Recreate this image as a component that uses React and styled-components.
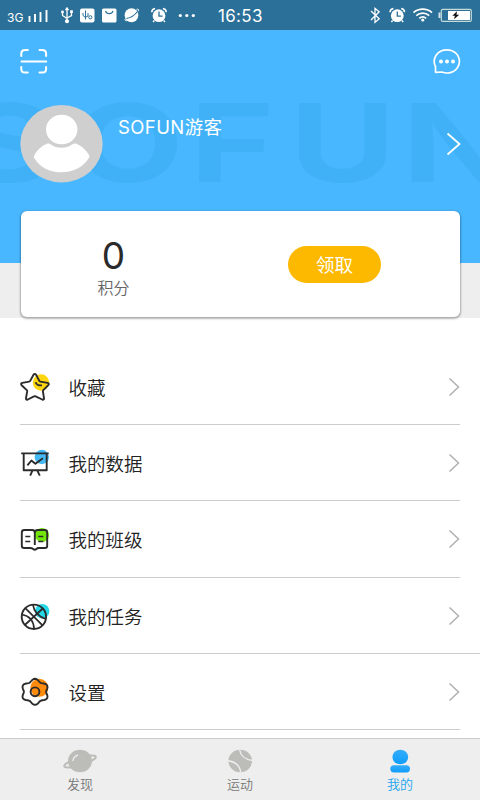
import React, { useState } from 'react';
import styled, { createGlobalStyle } from 'styled-components';

const menus = [
  { name: '收藏', icon: StarIcon },
  { name: '我的数据', icon: BoardIcon },
  { name: '我的班级', icon: BookIcon },
  { name: '我的任务', icon: BallIcon, wide: true },
  { name: '设置', icon: GearIcon },
];

const tabs = [
  { name: '发现', icon: PlanetIcon },
  { name: '运动', icon: TennisIcon },
  { name: '我的', icon: PersonIcon },
];

const App = () => {
  const [selectedTab, setSelectedTab] = useState('我的');

  return (
    <>
      <GlobalStyle />
      <Screen>
        <StatusBar>
          <StatusLeft />
          <Time>16:53</Time>
          <StatusRight />
        </StatusBar>
        <Header>
          <Watermark />
          <Toolbar>
            <ScanIcon />
            <MessageIcon />
          </Toolbar>
          <Profile>
            <Avatar />
            <UserName>SOFUN游客</UserName>
            <Arrow width={15} height={24} color='#fff' stroke={1.8} />
          </Profile>
        </Header>
        <CardArea>
          <Card>
            <Points>
              <Score>0</Score>
              <ScoreLabel>积分</ScoreLabel>
            </Points>
            <ButtonCell>
              <ReceiveButton>领取</ReceiveButton>
            </ButtonCell>
          </Card>
        </CardArea>
        <MenuList>
          {menus.map(({ name, icon: Icon, wide }) => (
            <MenuItem key={name} $wide={wide}>
              <Icon />
              <MenuName>{name}</MenuName>
              <Arrow width={12} height={20} color='#b0b0b0' stroke={1.5} />
            </MenuItem>
          ))}
        </MenuList>
        <TabBar>
          {tabs.map(({ name, icon: Icon }) => (
            <Tab key={name} $active={selectedTab === name} onClick={() => setSelectedTab(name)}>
              <Icon />
              {name}
            </Tab>
          ))}
        </TabBar>
      </Screen>
    </>
  );
};

export default App;

function AlarmGlyph({ x }) {
  return (
    <g transform={`translate(${x} 15.5)`}>
      <circle r='6.4' cy='0.2' fill='#fff' />
      <path d='M-7.3 -3.3a4 4 0 0 1 3.4 -3.6M7.3 -3.3a4 4 0 0 0 -3.4 -3.6M-4.7 5l-1.2 1.4M4.7 5l1.2 1.4' stroke='#fff' strokeWidth='1.5' fill='none' />
      <path d='M0 -4V0.6H3.6' stroke='#2b7098' strokeWidth='1.3' fill='none' />
    </g>
  );
}

function StatusLeft() {
  return (
    <svg width='218' height='30' viewBox='0 0 218 30'>
      <StatusText x='7' y='21.5'>3G</StatusText>
      <path d='M29.5 22v-6M35 22v-8M40.5 22v-10M46.5 22V10' stroke='#fff' strokeWidth='1.9' />
      <g stroke='#fff' strokeWidth='1.3' fill='none'>
        <path d='M67 8v13M62.5 12v3.5l4.5 3M71.5 11.5v4L67 18' />
        <circle cx='67' cy='21.2' r='1.4' fill='#fff' />
        <path d='M65.2 10L67 7.2 68.8 10z' fill='#fff' strokeWidth='0.5' />
        <circle cx='62.5' cy='12' r='0.8' />
        <path d='M70.8 11h1.4v1.4h-1.4z' />
      </g>
      <rect x='80' y='8.5' width='14.5' height='14' rx='2' fill='#fff' />
      <g stroke='#2b7098' strokeWidth='1' fill='none'>
        <path d='M85.5 10.5v9M83 13v2.5l2.5 2M88 13v3l-2.5 1.5' />
        <circle cx='90.3' cy='17.3' r='1.6' />
      </g>
      <rect x='102' y='8.5' width='14.5' height='14' rx='1.6' fill='#fff' />
      <path d='M105.5 10.8c1 3.8 6.5 3.8 7.5 0' stroke='#2b7098' strokeWidth='1.1' fill='none' />
      <ellipse cx='131.5' cy='15.2' rx='6.8' ry='7' fill='#fff' />
      <path d='M126.5 18.5c4-.7 8-3 11-7' stroke='#2b7098' strokeWidth='1.1' fill='none' />
      <path d='M125.3 18.8c-.7 1.6 .3 2.3 2 1.8M136.5 9.4c2-.7 2.6.3 1.8 1.8' stroke='#fff' strokeWidth='1' fill='none' />
      <AlarmGlyph x={159} />
      <g fill='#fff'>
        <circle cx='180.3' cy='15.5' r='1.6' />
        <circle cx='186.8' cy='15.5' r='1.6' />
        <circle cx='193.3' cy='15.5' r='1.6' />
      </g>
    </svg>
  );
}

function StatusRight() {
  return (
    <svg width='112' height='30' viewBox='368 0 112 30'>
      <path d='M371 11l8.2 7.8-4.2 3.6V8.4l4.2 3.3L371 20' stroke='#fff' strokeWidth='1.3' fill='none' />
      <AlarmGlyph x={397.3} />
      <g stroke='#fff' strokeWidth='1.7' fill='none'>
        <path d='M413.5 12.6c5.2-4.6 13.3-4.6 18.5 0' />
        <path d='M416.3 15.6c3.7-3.2 9.2-3.2 12.9 0' />
        <path d='M419.3 18.3c2-1.7 4.9-1.7 6.9 0' />
      </g>
      <circle cx='422.8' cy='20' r='1.6' fill='#fff' />
      <rect x='441.3' y='9.4' width='30' height='12' rx='1.4' stroke='#c4dbd8' strokeWidth='1.2' fill='none' />
      <path d='M440.5 12.5h-2v5.5h2z' fill='#d5e2ea' />
      <path d='M448 11h22v9h-22z' fill='#fff' />
      <path d='M457 11.3l-4.6 4.5h2.6l-1 3.5 5.2-4.5h-2.7z' fill='#111' />
    </svg>
  );
}

function Watermark() {
  return (
    <WatermarkSvg viewBox='0 30 480 233' aria-hidden='true'>
      <WatermarkText transform='scale(1.34 1)' y='182.5' x='-29 54 141.5 216 300'>
        SOFUN
      </WatermarkText>
    </WatermarkSvg>
  );
}

function ScanIcon() {
  return (
    <svg width='28' height='26' viewBox='20 48 28 26' fill='none' stroke='#fff' strokeWidth='2' strokeLinecap='round'>
      <path d='M21.3 56v-2.3q0-3.6 3.8-3.6h2.7M39.5 50.1h2.8q3.8 0 3.8 3.6V56M21.3 67v2q0 3.6 3.8 3.6h2.7M39.5 72.6h2.8q3.8 0 3.8-3.6v-2' />
      <path d='M21.5 61.5h24.7' />
    </svg>
  );
}

function MessageIcon() {
  return (
    <svg width='28' height='27' viewBox='433 48 28 27' fill='none' stroke='#fff' strokeWidth='1.7'>
      <path d='M435.5 72.3V66.5C431.5 58.5 437.3 49.8 447 49.8c7 0 12.4 5 12.4 11.5 0 6.6-5.4 11.7-12.4 11.7-2.3 0-3.8-.5-5.1-1z' strokeLinejoin='round' />
      <g fill='#fff' stroke='none'>
        <circle cx='441' cy='61.6' r='2' />
        <circle cx='447' cy='61.6' r='2' />
        <circle cx='453' cy='61.6' r='2' />
      </g>
    </svg>
  );
}

function Avatar() {
  return (
    <svg width='83' height='78' viewBox='20 105 83 78'>
      <ellipse cx='61.5' cy='143.8' rx='41.2' ry='38.7' fill='#cfcfcf' />
      <ellipse cx='61.7' cy='129.5' rx='15.7' ry='14.8' fill='#fff' />
      <path d='M47.5 143.6q1.5-.6 3 .6c6.5 4.8 15.5 4.8 22 0q1.5-1.2 3.2-.6c6 2.3 10.5 6.5 13.4 11.5q.8 1.5-.2 2.9C77.5 176.8 46 177.4 34.3 158.2q-.9-1.4-.1-2.9c3-5.2 7.3-9.4 13.3-11.7z' fill='#fff' />
    </svg>
  );
}

function Arrow({ width, height, color, stroke }) {
  return (
    <svg width={width} height={height} viewBox={`0 0 ${width} ${height}`} fill='none' stroke={color} strokeWidth={stroke}>
      <path d={`M1.5 1.5L${width - 1.5} ${height / 2}L1.5 ${height - 1.5}`} />
    </svg>
  );
}

function StarIcon() {
  return (
    <MenuSvg viewBox='20 372 30 30'>
      <circle cx='41' cy='382.5' r='8.2' fill='#ffd510' stroke='none' />
      <path d='M33.5 374.8q1.3-1.8 2.6 0l3.2 6.1q.3.6 1 .7l7.3 1.3q2 .6.7 2.3l-5 5q-.5.5-.4 1.2l1.1 6.8q.1 2-1.8 1.3l-6.6-3.2q-.8-.4-1.6 0l-6.2 3.2q-2 .7-1.8-1.3l1.2-6.8q.1-.7-.4-1.2l-5.2-5q-1.3-1.7.7-2.3l6.9-1.3q.7-.1 1-.7z' />
      <path d='M35.5 382.2c.8 2.3 3.6 3.6 6.4 3' />
    </MenuSvg>
  );
}

function BoardIcon() {
  return (
    <MenuSvg viewBox='20 448 30 30'>
      <circle cx='41.8' cy='457' r='7.2' fill='#45b9f5' stroke='none' />
      <path d='M21.2 453.4h27.5M23.7 453.5v16.7h23v-16.7M27.4 465.3l4-4.8 4 3.2 7.5-5.5M32.5 470.4l-2.3 5.2M37.2 470.4l2.6 5.2' />
    </MenuSvg>
  );
}

function BookIcon() {
  return (
    <MenuSvg viewBox='20 524 30 30'>
      <circle cx='42' cy='535' r='7' fill='#72e60a' stroke='none' />
      <path d='M34.8 533v12M34.8 533q0-3-2.5-3h-8q-2.5 0-2.5 2.5v13.2q0 2.3 2.3 2.3h6.5q2 0 2.5 1 1.7 1.4 3.4 0 .6-1 2.4-1h6q2.3 0 2.3-2.3v-13.2q0-2.5-2.5-2.5h-7q-2.9 0-2.9 3' />
      <path d='M25.3 536.5h5M25.3 541.5h5M38.3 536.5h5M38.3 541.5h5' strokeWidth='1.4' />
    </MenuSvg>
  );
}

function BallIcon() {
  return (
    <MenuSvg viewBox='20 600 30 30'>
      <circle cx='42.2' cy='610.2' r='7.2' fill='#25d8e8' stroke='none' />
      <circle cx='33.9' cy='615.8' r='12.2' />
      <path d='M25.3 607.2L42.5 624.4M24.8 624L42.8 607.5M33 603.8q1.5 10.5 13 14.2M21.8 613.5q11.5 2 12.3 14.3' strokeWidth='1.7' />
    </MenuSvg>
  );
}

// 六个齿的圆滑齿轮轮廓
const gearPoints = Array.from({ length: 72 }, (_, i) => {
  const angle = (i * Math.PI) / 36;
  const radius = 11.7 - 1.3 * Math.cos(6 * angle);
  return `${(35 + radius * 1.07 * Math.cos(angle)).toFixed(2)},${(691.8 + radius * Math.sin(angle)).toFixed(2)}`;
}).join(' ');

function GearIcon() {
  return (
    <MenuSvg viewBox='20 677 30 30'>
      <circle cx='39.3' cy='687.8' r='9' fill='#ff8b0c' stroke='none' />
      <polygon points={gearPoints} />
      <circle cx='35' cy='691.8' r='4.4' />
    </MenuSvg>
  );
}

function PlanetIcon() {
  return (
    <svg width='36' height='25' viewBox='62 749 36 25'>
      <ellipse cx='80' cy='761.5' rx='16.5' ry='3.7' transform='rotate(-17 80 761.5)' fill='none' stroke='#bcbdb9' strokeWidth='2' />
      <ellipse cx='80' cy='761' rx='12' ry='11.2' fill='#bcbdb9' />
      <path d='M73 760.5q.5-3.5 4.5-5.3' stroke='#eee' strokeWidth='1.4' fill='none' strokeLinecap='round' />
    </svg>
  );
}

function TennisIcon() {
  return (
    <svg width='26' height='25' viewBox='227 749 26 25'>
      <ellipse cx='240.2' cy='761' rx='11.8' ry='11.2' fill='#bcbdb9' />
      <path d='M239.5 749.5q1.5 9.5 13 11M228 760.8q11.5 1.5 12.8 11.7' stroke='#eee' strokeWidth='1.4' fill='none' />
    </svg>
  );
}

function PersonIcon() {
  return (
    <svg width='22' height='25' viewBox='389 749 22 25'>
      <defs>
        <linearGradient id='person' x1='0' y1='0' x2='0' y2='1'>
          <stop offset='0' stopColor='#35adfa' />
          <stop offset='1' stopColor='#0f9dfa' />
        </linearGradient>
      </defs>
      <g fill='url(#person)'>
        <ellipse cx='400.3' cy='757' rx='7.9' ry='7.3' />
        <rect x='390.3' y='765.2' width='19.7' height='7.2' rx='3.6' />
      </g>
    </svg>
  );
}

const GlobalStyle = createGlobalStyle`
  * {
    box-sizing: border-box;
  }

  body {
    margin: 0;
    font-family: Inter, 'Noto Sans CJK SC', sans-serif;
  }

  svg {
    display: block;
    flex-shrink: 0;
  }
`;

const Screen = styled.div`
  display: flex;
  flex-direction: column;
  width: 480px;
  height: 800px;
  overflow: hidden;
  background: #fff;
`;

const StatusBar = styled.div`
  display: flex;
  align-items: center;
  height: 30px;
  background: #2b7098;
`;

const StatusText = styled.text`
  fill: #fff;
  font-size: 12px;
`;

const Time = styled.span`
  flex: 1;
  padding-top: 2px;
  color: #fff;
  font-size: 17px;
  letter-spacing: 0.3px;
  line-height: 20px;
`;

const Header = styled.header`
  position: relative;
  height: 233px;
  background: #48b7ff;
`;

// 背景大字，位于头像和用户名下层
const WatermarkSvg = styled.svg`
  position: absolute;
  top: 0;
  left: 0;
  width: 480px;
  height: 233px;
`;

const WatermarkText = styled.text`
  fill: #40b1f7;
  font-size: 108px;
  font-weight: 700;
`;

const Toolbar = styled.div`
  position: relative;
  display: flex;
  justify-content: space-between;
  padding: 18px 19px 0 20px;
`;

const Profile = styled.div`
  position: relative;
  display: flex;
  align-items: center;
  height: 78px;
  margin-top: 30px;
  padding: 0 19px 0 20px;
`;

const UserName = styled.span`
  flex: 1;
  margin: 0 0 34px 15px;
  color: #fff;
  font-size: 18.5px;
  letter-spacing: 0.4px;
  line-height: 24px;
`;

const CardArea = styled.section`
  height: 55px;
  padding: 0 20px;
  background: #eee;
`;

const Card = styled.div`
  position: relative;
  display: flex;
  height: 106px;
  margin: -52px 0 0 1px;
  border-radius: 6px;
  background: #fff;
  box-shadow: 0 1px 2px 1px rgba(0, 0, 0, 0.28);
`;

const Points = styled.div`
  display: flex;
  flex-direction: column;
  align-items: center;
  width: 185px;
  padding-top: 24px;
`;

const Score = styled.strong`
  color: #2a2a2a;
  font-size: 37px;
  font-weight: 400;
  line-height: 42px;
`;

const ScoreLabel = styled.span`
  color: #666;
  font-size: 16px;
  font-weight: 350;
  line-height: 22px;
`;

const ButtonCell = styled.div`
  display: flex;
  align-items: center;
  padding-left: 82px;
`;

const ReceiveButton = styled.button`
  width: 93px;
  height: 37px;
  padding: 0 0 1px;
  border: none;
  border-radius: 19px;
  background: #fdb800;
  color: #fff;
  font-family: inherit;
  font-size: 18.5px;
`;

const MenuList = styled.ul`
  flex: 1;
  margin: 0;
  padding: 31px 0 0;
  list-style: none;
`;

const MenuItem = styled.li`
  display: flex;
  align-items: center;
  height: 76.2px;
  margin-left: 20px;
  margin-right: ${({ $wide }) => ($wide ? 0 : '20px')};
  padding-top: 1px;
  padding-right: ${({ $wide }) => ($wide ? '20px' : 0)};
  border-bottom: 1px solid #ccc;
`;

const MenuSvg = styled.svg`
  width: 30px;
  height: 30px;
  fill: none;
  stroke: #2b2b2b;
  stroke-width: 1.9px;
  stroke-linejoin: round;
`;

const MenuName = styled.span`
  flex: 1;
  margin-left: 18.5px;
  color: #222;
  font-size: 18.5px;
  font-weight: 350;
`;

const TabBar = styled.nav`
  display: flex;
  height: 62px;
  border-top: 1px solid #ccc;
  background: #eee;
`;

const Tab = styled.button`
  display: flex;
  flex: 1;
  flex-direction: column;
  align-items: center;
  padding: 10px 0 0;
  border: none;
  background: none;
  color: ${({ $active }) => ($active ? '#1da5ee' : '#777')};
  font-family: inherit;
  font-size: 13px;
  font-weight: 350;
  line-height: 20px;
`;
